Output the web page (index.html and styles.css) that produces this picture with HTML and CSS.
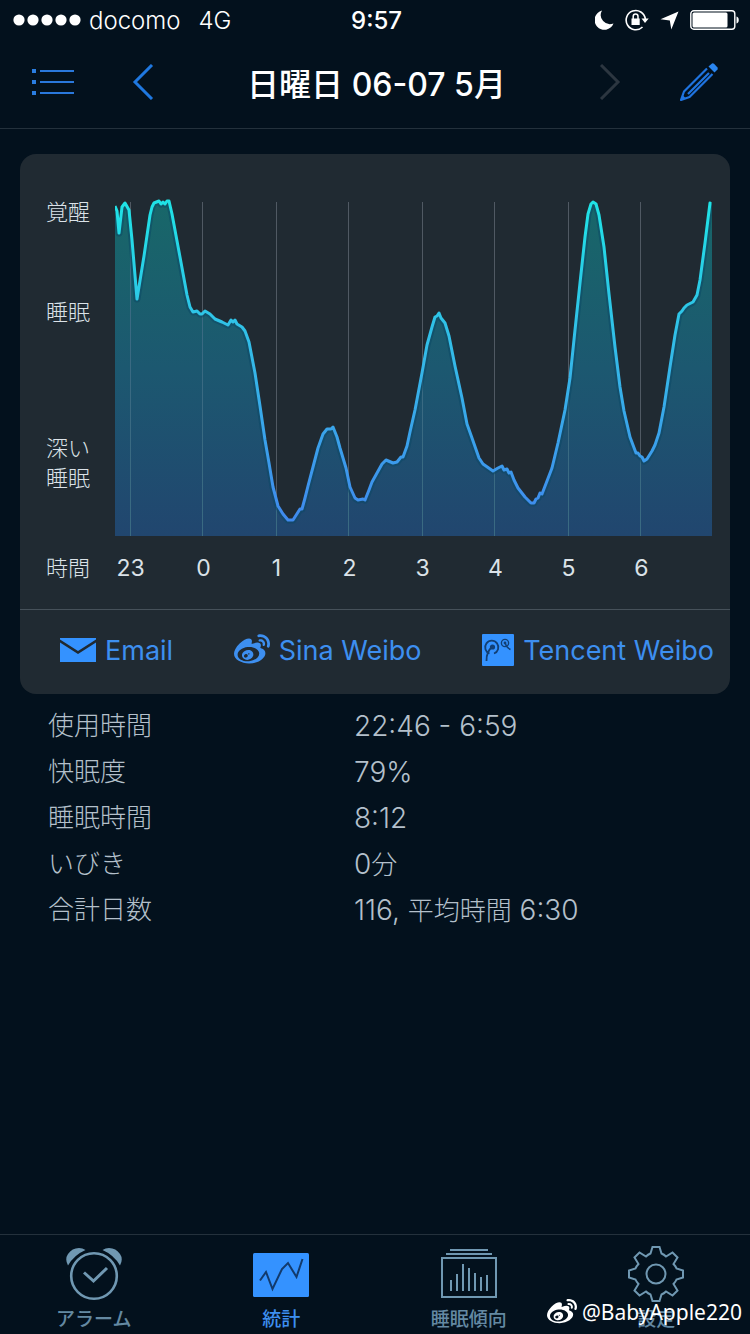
FILE: index.html
```html
<!DOCTYPE html>
<html lang="ja">
<head>
<meta charset="utf-8">
<meta name="viewport" content="width=device-width, initial-scale=1">
<title>統計</title>
<link rel="stylesheet" href="styles.css">
</head>
<body>
<svg class="defs" aria-hidden="true">
  <symbol id="weibo" viewBox="0 0 512 512">
    <path fill="currentColor" d="M407 177.6c7.6-24-13.4-46.8-37.4-41.7-22 4.8-28.8-28.1-7.1-32.8 50.1-10.9 92.3 37.1 76.5 84.8-6.8 21.2-38.8 10.8-32-10.3zM214.8 446.7C108.5 446.7 0 395.3 0 310.4c0-44.3 28-95.4 76.3-143.7C176 67 279.5 65.8 249.9 161c-4 13.1 12.3 5.7 12.3 6 79.5-33.6 140.5-16.8 114 51.4-3.7 9.4 1.1 10.9 8.3 13.1 135.7 42.3 34.8 215.2-169.7 215.2zm143.7-146.3c-5.4-55.7-78.5-94-163.4-85.7-84.8 8.6-148.8 60.3-143.4 116s78.5 94 163.4 85.7c84.8-8.6 148.8-60.3 143.4-116zM347.9 35.1c-25.9 5.6-16.8 43.7 8.3 38.3 72.3-15.2 134.8 52.8 111.7 124-7.4 24.2 29.1 37 37.4 12 31.9-99.8-55.1-195.9-157.4-174.3zm-78.5 311c-17.1 38.8-66.8 60-109.1 46.3-40.8-13.1-58-53.4-40.3-89.7 17.7-35.4 63.1-55.4 103.4-45.1 42 10.8 63.1 50.2 46 88.5zm-86.3-30c-12.9-5.4-30 .3-38 12.9-8.3 12.9-4.3 28 8.6 34 13.1 6 30.8.3 39.1-12.9 8-13.1 3.7-28.3-9.7-34zm32.6-13.4c-5.1-1.7-11.4.6-14.3 5.4-2.9 5.1-1.4 10.6 3.7 12.9 5.1 2 11.7-.3 14.6-5.4 2.8-5.2 1.1-10.9-4-12.9z"/>
  </symbol>
</svg>

<div class="status">
  <div class="status-left">
    <svg width="68" height="12" viewBox="0 0 68 12" fill="#fff" aria-hidden="true"><circle cx="6" cy="6" r="5.6"/><circle cx="20" cy="6" r="5.6"/><circle cx="34" cy="6" r="5.6"/><circle cx="48" cy="6" r="5.6"/><circle cx="62" cy="6" r="5.6"/></svg>
    <span class="carrier">docomo</span>
    <span class="network">4G</span>
  </div>
  <span class="clock">9:57</span>
  <div class="status-right">
    <svg width="19" height="20" viewBox="0 0 19 20" aria-hidden="true"><path fill="#fff" d="M7 .5A9.8 9.8 0 1 0 18.500 13.500 9.200 9.200 0 0 1 7 .5z"/></svg>
    <svg width="24" height="22" viewBox="0 0 24 22" aria-hidden="true"><path fill="none" stroke="#fff" stroke-width="1.600" d="M17.500 18A9.600 9.600 0 1 1 20.300 10"/><path fill="#fff" d="M16.500 9.500H23.700L20 14zM6.500 9.500h8.200V16H6.500z"/><path fill="none" stroke="#fff" stroke-width="1.500" d="M8.200 10V7.500a2.400 2.400 0 0 1 4.800 0V10"/></svg>
    <svg width="19" height="19" viewBox="0 0 19 19" aria-hidden="true"><path fill="#fff" d="M18.500.5 11.300 18.500 9.800 9.500.5 8.300z"/></svg>
    <svg width="50" height="20" viewBox="0 0 50 20" aria-hidden="true"><rect x=".8" y=".8" width="44" height="18.400" rx="3" fill="none" stroke="#fff" stroke-width="1.400"/><rect x="2.500" y="2.500" width="35" height="15" rx="1.500" fill="#fff"/><path fill="#fff" d="M46.500 6.500c3 .8 3 6.200 0 7z"/></svg>
  </div>
</div>

<header class="nav">
  <button class="icon-button" type="button" aria-label="一覧">
    <svg width="42" height="28" viewBox="0 0 42 28"><path fill="#2a7de0" d="M0 1h4v4H0zM0 12h4v4H0zM0 23h4v4H0z"/><path stroke="#2a78dc" stroke-width="2" d="M8 3h34M8 14h34M8 25h34"/></svg>
  </button>
  <button class="icon-button" type="button" aria-label="前の日">
    <svg width="22" height="36" viewBox="0 0 22 36"><path fill="none" stroke="#1f78e0" stroke-width="3" d="M20 1 3 18 20 35"/></svg>
  </button>
  <h1 class="nav-title">日曜日 06-07 5月</h1>
  <button class="icon-button" type="button" aria-label="次の日" disabled>
    <svg width="22" height="36" viewBox="0 0 22 36"><path fill="none" stroke="#2c3640" stroke-width="3" d="M2 1 19 18 2 35"/></svg>
  </button>
  <button class="icon-button" type="button" aria-label="編集">
    <svg width="40" height="40" viewBox="0 0 40 40"><path fill="none" stroke="#1f74e0" stroke-width="2.200" stroke-linejoin="round" d="M28 6.500 5 29.500 2 38 10.500 35 33.500 12M30 11 9 32"/><path fill="#2a86f0" d="M29.500 4.500 33 1.500Q34 1 35 1.800L38.500 5.500Q39 6.500 38.500 7.500L35.500 10.500z"/><path fill="#1f74e0" d="m2 38 1.500-5 3.500 3.500z"/></svg>
  </button>
</header>

<main class="content">
  <section class="card" aria-label="睡眠グラフ">
    <div class="chart">
      <div class="levels">
        <span>覚醒</span>
        <span>睡眠</span>
        <span>深い<br>睡眠</span>
      </div>
      <svg class="plot" viewBox="115 196 597 341" preserveAspectRatio="none" role="img" aria-label="睡眠の深さ">
        <defs>
          <linearGradient id="line" gradientUnits="userSpaceOnUse" x1="0" y1="200" x2="0" y2="525"><stop offset="0" stop-color="#1fe3e6"/><stop offset=".5" stop-color="#35b8e8"/><stop offset="1" stop-color="#4088ee"/></linearGradient>
          <linearGradient id="area" gradientUnits="userSpaceOnUse" x1="0" y1="200" x2="0" y2="536"><stop offset="0" stop-color="#186769"/><stop offset=".5" stop-color="#1c5870"/><stop offset="1" stop-color="#21466f"/></linearGradient>
          <path id="curve" d="M115 206 117 211 119 233 122 207 125 203 129 210 132 240 137 299 144 256 150 215 152 207 154 203 159 201 161 204 163 202 165 204 167 201 169 201 172 214 180 257 187 295 190 307 193 312 197 311 200 314 202 314 205 311 210 314 215 319 222 322 228 325 231 320 233 322 235 320 237 324 242 327 245 331 249 342 255 373 260 406 265 440 269 463 273 487 278 506 283 514 288 520 293 520 300 509 302 509 305 498 308 486 313 467 318 448 323 434 327 429 331 429 333 427 335 432 337 437 340 448 346 468 350 487 355 498 358 500 363 499 365 500 369 490 372 482 377 473 382 464 386 460 393 463 397 462 401 457 403 457 407 446 410 432 415 410 422 373 427 345 432 327 435 317 437 316 439 313 441 318 445 323 449 336 455 366 462 398 467 424 472 438 479 458 483 464 493 471 498 468 502 466 504 470 507 469 509 473 511 472 514 480 518 488 525 497 531 503 534 503 536 499 538 498 540 493 542 494 547 481 552 468 558 443 565 410 570 378 575 330 580 283 585 237 588 214 591 204 593 202 596 204 599 215 604 247 609 294 615 347 620 387 624 411 630 437 636 453 638 453 640 456 642 457 644 461 647 459 652 451 655 445 659 433 664 407 670 367 675 335 679 314 682 311 684 308 687 305 693 302 697 295 700 280 705 243 710 203 711 204"/>
          <clipPath id="under"><path d="M115 206 117 211 119 233 122 207 125 203 129 210 132 240 137 299 144 256 150 215 152 207 154 203 159 201 161 204 163 202 165 204 167 201 169 201 172 214 180 257 187 295 190 307 193 312 197 311 200 314 202 314 205 311 210 314 215 319 222 322 228 325 231 320 233 322 235 320 237 324 242 327 245 331 249 342 255 373 260 406 265 440 269 463 273 487 278 506 283 514 288 520 293 520 300 509 302 509 305 498 308 486 313 467 318 448 323 434 327 429 331 429 333 427 335 432 337 437 340 448 346 468 350 487 355 498 358 500 363 499 365 500 369 490 372 482 377 473 382 464 386 460 393 463 397 462 401 457 403 457 407 446 410 432 415 410 422 373 427 345 432 327 435 317 437 316 439 313 441 318 445 323 449 336 455 366 462 398 467 424 472 438 479 458 483 464 493 471 498 468 502 466 504 470 507 469 509 473 511 472 514 480 518 488 525 497 531 503 534 503 536 499 538 498 540 493 542 494 547 481 552 468 558 443 565 410 570 378 575 330 580 283 585 237 588 214 591 204 593 202 596 204 599 215 604 247 609 294 615 347 620 387 624 411 630 437 636 453 638 453 640 456 642 457 644 461 647 459 652 451 655 445 659 433 664 407 670 367 675 335 679 314 682 311 684 308 687 305 693 302 697 295 700 280 705 243 710 203 712 204V536H115z"/></clipPath>
        </defs>
        <path class="grid-line" d="M130.500 202V536M202.500 202V536M276.500 202V536M348.500 202V536M422.500 202V536M494.500 202V536M568.500 202V536M640.500 202V536"/>
        <g clip-path="url(#under)">
          <rect x="115" y="196" width="597" height="340" fill="url(#area)"/>
          <path class="grid-line inner" d="M130.500 202V536M202.500 202V536M276.500 202V536M348.500 202V536M422.500 202V536M494.500 202V536M568.500 202V536M640.500 202V536"/>
          <use href="#curve" class="curve-shade"/>
        </g>
        <use href="#curve" class="curve" stroke="url(#line)"/>
      </svg>
    </div>
    <div class="hours">
      <span>時間</span>
      <div class="hour-list"><span>23</span><span>0</span><span>1</span><span>2</span><span>3</span><span>4</span><span>5</span><span>6</span></div>
    </div>
    <div class="share">
      <button class="share-button" type="button">
        <svg width="36" height="24" viewBox="0 0 36 24" aria-hidden="true"><path fill="#3492ff" d="M0 0h36v1.500L18 13 0 1.500zM0 4.500 18 16 36 4.500V24H0z"/></svg>
        Email
      </button>
      <button class="share-button" type="button">
        <svg width="36" height="36" aria-hidden="true"><use href="#weibo"/></svg>
        Sina Weibo
      </button>
      <button class="share-button" type="button">
        <svg width="32" height="32" viewBox="0 0 32 32" aria-hidden="true"><rect width="32" height="32" rx="1" fill="#3492ff"/><g fill="none" stroke="#123f74" stroke-width="1.800"><path d="M7.500 19.500A6.600 6.600 0 1 1 12 19.500M10.500 12.500Q4 18 4.500 27"/><circle cx="23" cy="9" r="3.600" stroke-width="1.400"/><path stroke-width="1.400" d="M23.500 9.500Q24 13.500 28.500 15.500"/></g><circle cx="10.500" cy="13" r="2.600" fill="#123f74"/><circle cx="23" cy="9" r="1.400" fill="#123f74"/></svg>
        Tencent Weibo
      </button>
    </div>
  </section>

  <dl class="stats">
    <dt>使用時間</dt><dd>22:46 - 6:59</dd>
    <dt>快眠度</dt><dd>79%</dd>
    <dt>睡眠時間</dt><dd>8:12</dd>
    <dt>いびき</dt><dd>0<span class="kanji">分</span></dd>
    <dt>合計日数</dt><dd>116, <span class="kanji">平均時間</span> 6:30</dd>
  </dl>
</main>

<footer class="footer">
  <nav class="tabs">
    <a class="tab" href="#alarm">
      <svg width="56" height="56" viewBox="0 0 56 56" aria-hidden="true"><path fill="#7098b2" d="M2 19.500Q-1.500 13 2 8 6 2 13 2 16.500 2 19.500 4 8 9 2 19.500zM54 19.500Q57.500 13 54 8 50 2 43 2 39.500 2 36.500 4 48 9 54 19.500z"/><circle cx="28" cy="30" r="22.800" fill="none" stroke="#7098b2" stroke-width="2.600"/><path fill="none" stroke="#7098b2" stroke-width="3" d="m18 26.500 9.500 8.500L41 22"/></svg>
      アラーム
    </a>
    <a class="tab active" href="#stats" aria-current="page">
      <svg width="56" height="56" viewBox="0 0 56 56" aria-hidden="true"><rect y="7" width="56" height="44" rx="1.500" fill="#3492ff"/><path fill="none" stroke="#123a6c" stroke-width="2" d="M7 34.500 13 26 19.500 43 29 23 35 17 43.500 31 49.500 13"/></svg>
      統計
    </a>
    <a class="tab" href="#trends">
      <svg width="56" height="56" viewBox="0 0 56 56" aria-hidden="true"><path fill="none" stroke="#7098b2" stroke-width="2" d="M9 4h38M5 8h46M1 12h54v39H1zM10 34v11M16 28v17M22 18v27M28 22v23M34 27v18M40 31v14M46 29v16"/></svg>
      睡眠傾向
    </a>
    <a class="tab" href="#settings">
      <svg width="56" height="56" viewBox="-28 -28 56 56" fill="none" stroke="#7098b2" stroke-width="2" aria-hidden="true"><path id="teeth" d="M0-27H3.500L5.500-20.500Q8-19.500 10-17.500L16.500-21.500 21.500-16.500 17.500-10Q19.500-8 20.500-5.500L27-3.500V0"/><use href="#teeth" transform="rotate(90)"/><use href="#teeth" transform="rotate(180)"/><use href="#teeth" transform="rotate(270)"/><circle r="9.500"/></svg>
      設定
    </a>
  </nav>
  <div class="watermark">
    <svg width="30" height="30" aria-hidden="true"><use href="#weibo"/></svg>
    @BabyApple220
  </div>
</footer>
</body>
</html>
```

FILE: styles.css
```css
* {
  box-sizing: border-box;
}

body {
  margin: 0;
  min-height: 100vh;
  display: flex;
  flex-direction: column;
  background: #03111d;
  color: #fff;
  font-family: Inter, "Noto Sans CJK JP", sans-serif;
}

button {
  margin: 0;
  padding: 0;
  border: 0;
  background: none;
  color: inherit;
  font: inherit;
}

svg {
  display: block;
  flex: none;
}

.defs {
  position: absolute;
  width: 0;
  height: 0;
}

/* Status bar */
.status {
  display: grid;
  grid-template-columns: 1fr auto 1fr;
  align-items: center;
  height: 40px;
  padding: 0 10px 0 13px;
  font-size: 24px;
}

.status-left,
.status-right {
  display: flex;
  align-items: center;
}

.carrier {
  margin-left: 8px;
  font-weight: 300;
}

.network {
  margin-left: 18px;
  font-weight: 300;
}

.clock {
  font-weight: 500;
}

.status-right {
  justify-content: flex-end;
  gap: 11px;
}

/* Navigation bar */
.nav {
  display: flex;
  align-items: center;
  gap: 58px;
  height: 89px;
  padding: 0 31px 4px 32px;
  border-bottom: 1px solid #24313c;
}

.nav-title {
  flex: 1;
  margin: 0;
  text-align: center;
  white-space: nowrap;
  font-size: 32px;
  font-weight: 500;
}

/* Chart card */
.content {
  flex: 1;
  padding: 25px 20px 0;
}

.card {
  border-radius: 16px;
  background: #202a32;
  color: #dbe2e8;
}

.chart {
  display: flex;
  padding: 42px 18px 0 26px;
}

.levels {
  width: 69px;
  flex: none;
  display: grid;
  grid-template-rows: 100px 136px auto;
  padding-top: 1px;
  font-size: 22px;
  font-weight: 300;
  line-height: 30px;
}

.plot {
  flex: 1;
  min-width: 0;
  height: 341px;
}

.grid-line {
  stroke: #505963;
  stroke-width: 1;
}

.grid-line.inner {
  stroke: #3a6a82;
}

.curve,
.curve-shade {
  fill: none;
  stroke-linejoin: round;
}

.curve {
  stroke-width: 3;
}

.curve-shade {
  stroke: #0a4766;
  stroke-opacity: 0.5;
  stroke-width: 7;
}

.hours {
  display: flex;
  align-items: baseline;
  height: 72px;
  padding: 15px 52px 0 26px;
  font-size: 22px;
  font-weight: 300;
  line-height: 32px;
}

.hours > span {
  width: 48px;
}

.hour-list {
  flex: 1;
  display: grid;
  grid-template-columns: repeat(8, 1fr);
  font-size: 23px;
  font-weight: 400;
  text-align: center;
}

.share {
  display: flex;
  justify-content: space-between;
  align-items: center;
  height: 85px;
  padding: 0 16px 4px 40px;
  border-top: 1px solid #46515a;
  color: #3d8ff0;
  font-size: 27px;
}

.share-button {
  display: flex;
  align-items: center;
  gap: 9px;
  white-space: nowrap;
}

/* Figures */
.stats {
  display: grid;
  grid-template-columns: 306px 1fr;
  grid-auto-rows: 46px;
  align-items: center;
  margin: 0;
  padding: 9px 28px;
  color: #b4c0cb;
  font-size: 26px;
  font-weight: 300;
  line-height: 46px;
}

.stats dd {
  margin: 0;
  font-size: 28px;
}

.stats .kanji {
  font-size: 26px;
}

/* Tab bar */
.footer {
  position: relative;
}

.tabs {
  display: grid;
  grid-template-columns: repeat(4, 1fr);
  height: 100px;
  padding-top: 11px;
  border-top: 1px solid #24313c;
}

.tab {
  display: flex;
  flex-direction: column;
  align-items: center;
  gap: 6px;
  color: #6489a2;
  font-size: 19px;
  font-weight: 500;
  line-height: 24px;
  text-decoration: none;
}

.tab.active {
  color: #3d8ff0;
}

.watermark {
  position: absolute;
  right: 8px;
  bottom: 6px;
  display: flex;
  align-items: center;
  gap: 5px;
  font-family: "Noto Sans", sans-serif;
  font-size: 21px;
  line-height: 32px;
}
```
